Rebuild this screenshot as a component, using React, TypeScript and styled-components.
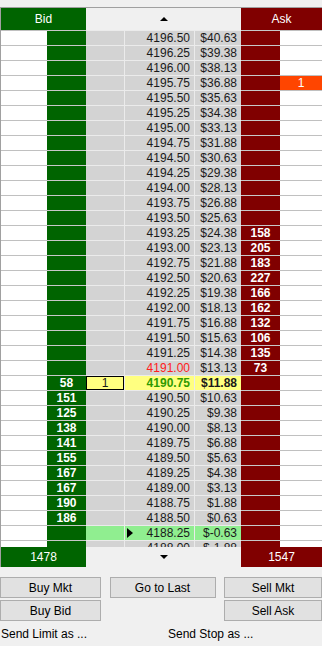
import styled, { createGlobalStyle } from 'styled-components';

const GlobalStyle = createGlobalStyle`
  html, body {
    margin: 0;
    padding: 0;
    background: #f0f0f0;
  }
  body {
    font-family: 'Liberation Sans', Arial, sans-serif;
    font-size: 12px;
    color: #000;
  }
`;

type Kind = 'bidOrder' | 'bid' | 'order' | 'price' | 'pnl' | 'ask' | 'askOrder';

interface Row {
  price: number;
  bid?: number;
  ask?: number;
  bidOrder?: number;
  askOrder?: number;
}

const bids: Record<string, number> = {
  '4190.75': 58,
  '4190.50': 151,
  '4190.25': 125,
  '4190.00': 138,
  '4189.75': 141,
  '4189.50': 155,
  '4189.25': 167,
  '4189.00': 167,
  '4188.75': 190,
  '4188.50': 186,
};

const asks: Record<string, number> = {
  '4193.25': 158,
  '4193.00': 205,
  '4192.75': 183,
  '4192.50': 227,
  '4192.25': 166,
  '4192.00': 162,
  '4191.75': 132,
  '4191.50': 106,
  '4191.25': 135,
  '4191.00': 73,
};

const LAST = 4190.75;
const PREV = 4191.0;
const ENTRY = 4188.25;

const rows: Row[] = [];
for (let p = 4196.5; p >= 4188; p -= 0.25) {
  const key = p.toFixed(2);
  rows.push({
    price: p,
    bid: bids[key],
    ask: asks[key],
    bidOrder: key === '4190.75' ? 1 : undefined,
    askOrder: key === '4195.75' ? 1 : undefined,
  });
}

// P&L per contract, $5 a point, relative to the fill
const pnl = (price: number) => {
  const ticks = Math.round((price - ENTRY) / 0.25);
  const milli = ticks * 1250 - 625;
  const sign = milli < 0 ? '-' : '';
  const cents = Math.floor((Math.abs(milli) + 5) / 10);
  return `$${sign}${(cents / 100).toFixed(2)}`;
};

const App = () => {
  return (
    <>
      <GlobalStyle />
      <Page>
        <Ladder>
          <Header>
            <SideHead $bg="#006400">Bid</SideHead>
            <CenterHead>
              <ArrowUp />
            </CenterHead>
            <SideHead $bg="#800000">Ask</SideHead>
          </Header>
          <Body>
            {rows.map((r) => {
              const isLast = r.price === LAST;
              const isPrev = r.price === PREV;
              const isEntry = r.price === ENTRY;
              return (
                <RowLine key={r.price}>
                  <Cell $kind="bidOrder" />
                  <Cell $kind="bid">{r.bid}</Cell>
                  <Cell $kind="order" $hl={isEntry ? 'entry' : r.bidOrder ? 'working' : undefined}>
                    {r.bidOrder}
                  </Cell>
                  <PriceCell $kind="price" $hl={isLast ? 'last' : isEntry ? 'entry' : undefined} $prev={isPrev}>
                    {isEntry && <Marker />}
                    <span>{r.price.toFixed(2)}</span>
                  </PriceCell>
                  <Cell $kind="pnl" $hl={isLast ? 'lastPnl' : isEntry ? 'entry' : undefined}>
                    {pnl(r.price)}
                  </Cell>
                  <Cell $kind="ask">{r.ask}</Cell>
                  <Cell $kind="askOrder" $hl={r.askOrder ? 'ask' : undefined}>
                    {r.askOrder}
                  </Cell>
                </RowLine>
              );
            })}
          </Body>
          <Footer>
            <SideHead $bg="#006400">1478</SideHead>
            <CenterHead>
              <ArrowDown />
            </CenterHead>
            <SideHead $bg="#800000">1547</SideHead>
          </Footer>
        </Ladder>
        <Buttons>
          <Button>Buy Mkt</Button>
          <Button>Go to Last</Button>
          <Button>Sell Mkt</Button>
          <Button>Buy Bid</Button>
          <span />
          <Button>Sell Ask</Button>
        </Buttons>
        <Options>
          <span>Send Limit as ...</span>
          <span>Send Stop as ...</span>
        </Options>
      </Page>
    </>
  );
};

export default App;

const COLS = '46px 39px 38px 70px 47px 39px 1fr';

const Page = styled.div`
  width: 322px;
  height: 646px;
  overflow: hidden;
  padding-top: 7px;
  box-sizing: border-box;
`;

const Ladder = styled.div`
  border-top: 1px solid #a0a0a0;
  border-left: 1px solid #a0a0a0;
`;

const Header = styled.div`
  display: grid;
  grid-template-columns: 85px 155px 1fr;
  height: 22px;
`;

const SideHead = styled.div<{ $bg: string }>`
  background: ${(p) => p.$bg};
  color: #fff;
  display: grid;
  place-items: center;
  font-size: 12px;
`;

const CenterHead = styled.div`
  background: #f0f0f0;
  display: grid;
  place-items: center;
`;

const ArrowUp = styled.span`
  width: 0;
  height: 0;
  border-left: 4px solid transparent;
  border-right: 4px solid transparent;
  border-bottom: 4px solid #000;
`;

const ArrowDown = styled.span`
  width: 0;
  height: 0;
  border-left: 4px solid transparent;
  border-right: 4px solid transparent;
  border-top: 4px solid #000;
`;

const Body = styled.div`
  height: 517px;
  overflow: hidden;
`;

const RowLine = styled.div`
  display: grid;
  grid-template-columns: ${COLS};
  height: 15px;
`;

type Hl = 'entry' | 'working' | 'last' | 'lastPnl' | 'ask' | undefined;

const bgFor = (kind: Kind, hl: Hl) => {
  if (hl === 'entry') return '#90ee90';
  if (hl === 'working' || hl === 'last' || hl === 'lastPnl') return '#ffff80';
  if (hl === 'ask') return '#ff4500';
  if (kind === 'bid') return '#006400';
  if (kind === 'ask') return '#800000';
  if (kind === 'bidOrder' || kind === 'askOrder') return '#fff';
  return '#d3d3d3';
};

const lineFor = (kind: Kind) => {
  if (kind === 'bidOrder' || kind === 'askOrder') return '#c0c0c0';
  if (kind === 'bid' || kind === 'ask') return '#c8c8c8';
  return '#ebebeb';
};

const Cell = styled.div<{ $kind: Kind; $hl?: Hl; $prev?: boolean }>`
  box-sizing: border-box;
  height: 15px;
  border-top: 1px solid ${(p) => lineFor(p.$kind)};
  border-left: ${(p) => (p.$kind === 'price' || p.$kind === 'pnl' ? '1px solid #ebebeb' : 'none')};
  background: ${(p) => bgFor(p.$kind, p.$hl)};
  line-height: 14px;
  font-size: 12px;
  white-space: nowrap;
  overflow: hidden;
  padding: 0 4px;
  text-align: ${(p) => (p.$kind === 'price' || p.$kind === 'pnl' ? 'right' : 'center')};
  color: ${(p) =>
    p.$kind === 'bid' || p.$kind === 'ask' || p.$hl === 'ask'
      ? '#fff'
      : p.$hl === 'last'
        ? '#2e9a00'
        : p.$prev
          ? '#ff2020'
          : '#1a1a1a'};
  font-weight: ${(p) =>
    p.$kind === 'bid' || p.$kind === 'ask' || p.$hl === 'last' || p.$hl === 'lastPnl'
      ? 700
      : 400};
  box-shadow: ${(p) => (p.$hl === 'working' ? 'inset 0 0 0 1px #000' : 'none')};
`;

const PriceCell = styled(Cell)`
  display: flex;
  align-items: center;
  justify-content: space-between;
  padding-left: 2px;

  span:last-child {
    margin-left: auto;
  }
`;

const Marker = styled.span`
  width: 0;
  height: 0;
  border-top: 5px solid transparent;
  border-bottom: 5px solid transparent;
  border-left: 6px solid #000;
`;

const Footer = styled.div`
  display: grid;
  grid-template-columns: 85px 155px 1fr;
  height: 20px;
`;

const Buttons = styled.div`
  display: grid;
  grid-template-columns: 101px 106px 98px;
  grid-auto-rows: 21px;
  justify-content: space-between;
  row-gap: 2px;
  margin-top: 10px;
`;

const Button = styled.button`
  font-family: 'Liberation Sans', Arial, sans-serif;
  font-size: 12px;
  color: #000;
  background: #e1e1e1;
  border: 1px solid #adadad;
  padding: 0;
  margin: 0;
`;

const Options = styled.div`
  display: grid;
  grid-template-columns: 167px 1fr;
  padding-left: 1px;
  margin-top: 6px;
  font-size: 12px;
`;
